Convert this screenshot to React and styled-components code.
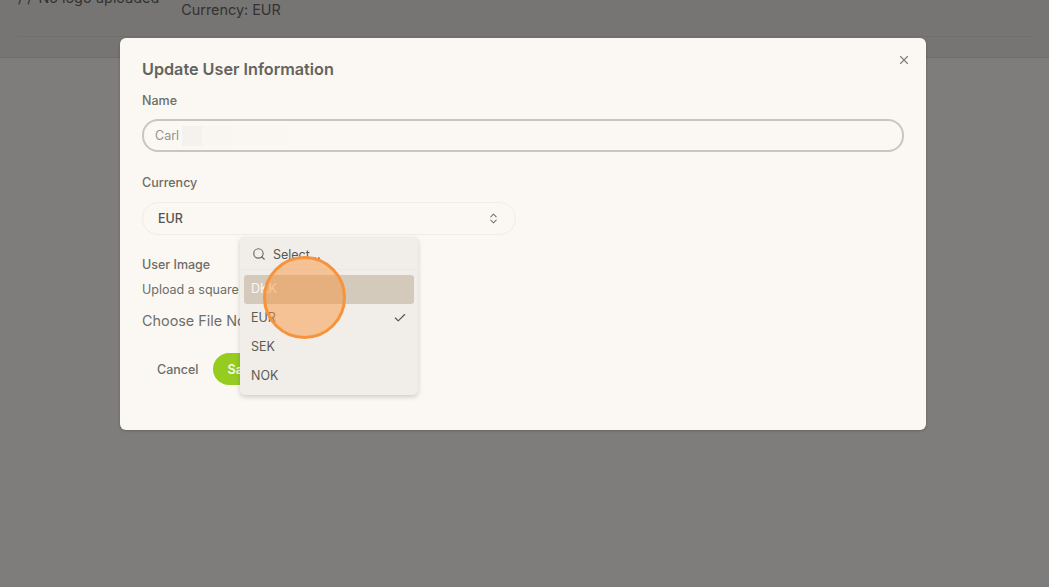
import React from "react";
import styled, { createGlobalStyle } from "styled-components";
import { Search, Check, X, ChevronsUpDown } from "lucide-react";

const GlobalStyle = createGlobalStyle`
	html, body {
		margin: 0;
		height: 100%;
		background: #7e7d7b;
		font-family: Inter, "Liberation Sans", sans-serif;
		overflow: hidden;
	}
`;

const Page = styled.div`
	position: relative;
	width: 1049px;
	height: 587px;
	overflow: hidden;
	background: #7e7d7b;
`;

const Header = styled.header`
	height: 57px;
	background: #767573;
	border-bottom: 1px solid #6f6e6c;
	overflow: hidden;
`;

const HeaderRow = styled.div`
	display: flex;
	align-items: flex-start;
	height: 36px;
	margin: 0 18px;
	gap: 22px;
	border-bottom: 1px solid #716f6d;
	font-size: 14.4px;
	color: #323230;
`;

const LogoNote = styled.div`
	display: flex;
	align-items: center;
	gap: 6px;
	margin-top: -12px;
	line-height: 20px;
`;

const Currency = styled.div`
	line-height: 20px;
`;

const Modal = styled.section`
	position: absolute;
	left: 120px;
	top: 38px;
	width: 806px;
	height: 392px;
	box-sizing: border-box;
	padding: 21px 22px;
	background: #fbf8f3;
	border-radius: 6px;
	box-shadow: 0 1px 3px rgba(0, 0, 0, 0.2);
`;

const Title = styled.h2`
	margin: 0 0 14px;
	font-size: 16.2px;
	line-height: 20px;
	font-weight: 600;
	color: #62645e;
`;

const Close = styled.button`
	position: absolute;
	top: 15px;
	right: 15px;
	display: flex;
	padding: 0;
	border: 0;
	background: none;
	color: #807f7a;
`;

const Label = styled.label`
	display: block;
	font-size: 12.5px;
	line-height: 16px;
	font-weight: 500;
	color: #6c6d68;
`;

const NameField = styled.div`
	display: flex;
	align-items: center;
	height: 33px;
	box-sizing: border-box;
	margin: 10px 0 23px;
	padding: 0 11px;
	border: 2px solid #c9c6c0;
	border-radius: 16px;
	font-size: 12.5px;
	color: #93928d;
`;

const Blur = styled.span`
	width: 106px;
	height: 20px;
	margin-left: 3px;
	background: linear-gradient(to right, #f5f2ed 0 20px, #f9f6f1 20px 50px, #faf7f2 50px 100%);
`;

const SelectBox = styled.div`
	display: flex;
	align-items: center;
	justify-content: space-between;
	width: 374px;
	height: 33px;
	box-sizing: border-box;
	margin: 11px 0 22px;
	padding: 0 15px;
	border: 1px solid #f0ede7;
	border-radius: 16px;
	font-size: 12.5px;
	font-weight: 500;
	color: #55534f;
	svg {
		color: #77766f;
	}
`;

const Hint = styled.p`
	margin: 9px 0 14px;
	font-size: 12.5px;
	line-height: 16px;
	color: #6c6d68;
`;

const FileRow = styled.div`
	font-size: 14.4px;
	line-height: 18px;
	color: #6e6f69;
`;

const Actions = styled.div`
	display: flex;
	align-items: center;
	gap: 14px;
	margin-top: 23px;
`;

const Cancel = styled.button`
	padding: 0 0 0 15px;
	border: 0;
	background: none;
	font: 500 12.5px Inter, "Liberation Sans", sans-serif;
	color: #6c6d68;
`;

const Save = styled.button`
	width: 90px;
	height: 32px;
	padding: 0 0 0 15px;
	border: 0;
	border-radius: 16px;
	text-align: left;
	background: #96cc20;
	font: 600 12.5px Inter, "Liberation Sans", sans-serif;
	color: #f4f8e6;
`;

const Menu = styled.div`
	position: absolute;
	left: 240px;
	top: 237px;
	width: 178px;
	height: 158px;
	box-sizing: border-box;
	background: #f1eee9;
	border-radius: 5px;
	box-shadow: 0 2px 5px rgba(0, 0, 0, 0.18);
`;

const MenuSearch = styled.div`
	display: flex;
	align-items: center;
	gap: 7px;
	height: 33px;
	box-sizing: border-box;
	padding: 2px 0 0 12px;
	border-bottom: 1px solid #ebe8e2;
	font-size: 12.5px;
	color: #575652;
	svg {
		color: #6a6964;
	}
`;

const Options = styled.ul`
	margin: 0;
	padding: 5px 4px;
	list-style: none;
`;

const Option = styled.li`
	display: flex;
	align-items: center;
	justify-content: space-between;
	height: 29px;
	box-sizing: border-box;
	padding: 0 7px 2px;
	border-radius: 3px;
	font-size: 12.5px;
	background: ${(p) => (p.$active ? "#d3cabc" : "transparent")};
	color: ${(p) => (p.$active ? "#fbf8f3" : "#5b5a55")};
	svg {
		color: #55544f;
	}
`;

const ClickRing = styled.div`
	position: absolute;
	left: 263px;
	top: 256px;
	width: 83px;
	height: 83px;
	box-sizing: border-box;
	border: 3.5px solid #f7933a;
	border-radius: 50%;
	background: rgba(247, 149, 63, 0.5);
`;

const currencies = ["DKK", "EUR", "SEK", "NOK"];

const App = () => {
	return (
		<Page>
			<GlobalStyle />
			<Header>
				<HeaderRow>
					<LogoNote>
						<span>/ /</span>
						<span>No logo uploaded</span>
					</LogoNote>
					<Currency>Currency: EUR</Currency>
				</HeaderRow>
			</Header>

			<Modal>
				<Title>Update User Information</Title>
				<Close aria-label="Close">
					<X size={14} />
				</Close>
				<Label>Name</Label>
				<NameField>
					Carl
					<Blur />
				</NameField>
				<Label>Currency</Label>
				<SelectBox>
					EUR
					<ChevronsUpDown size={13} />
				</SelectBox>
				<Label>User Image</Label>
				<Hint>Upload a square image</Hint>
				<FileRow>Choose File No file chosen</FileRow>
				<Actions>
					<Cancel>Cancel</Cancel>
					<Save>Save</Save>
				</Actions>
			</Modal>

			<Menu>
				<MenuSearch>
					<Search size={14} />
					Select...
				</MenuSearch>
				<Options>
					{currencies.map((c) => (
						<Option key={c} $active={c === "DKK"}>
							{c}
							{c === "EUR" && <Check size={14} />}
						</Option>
					))}
				</Options>
			</Menu>
			<ClickRing />
		</Page>
	);
};

export default App;
